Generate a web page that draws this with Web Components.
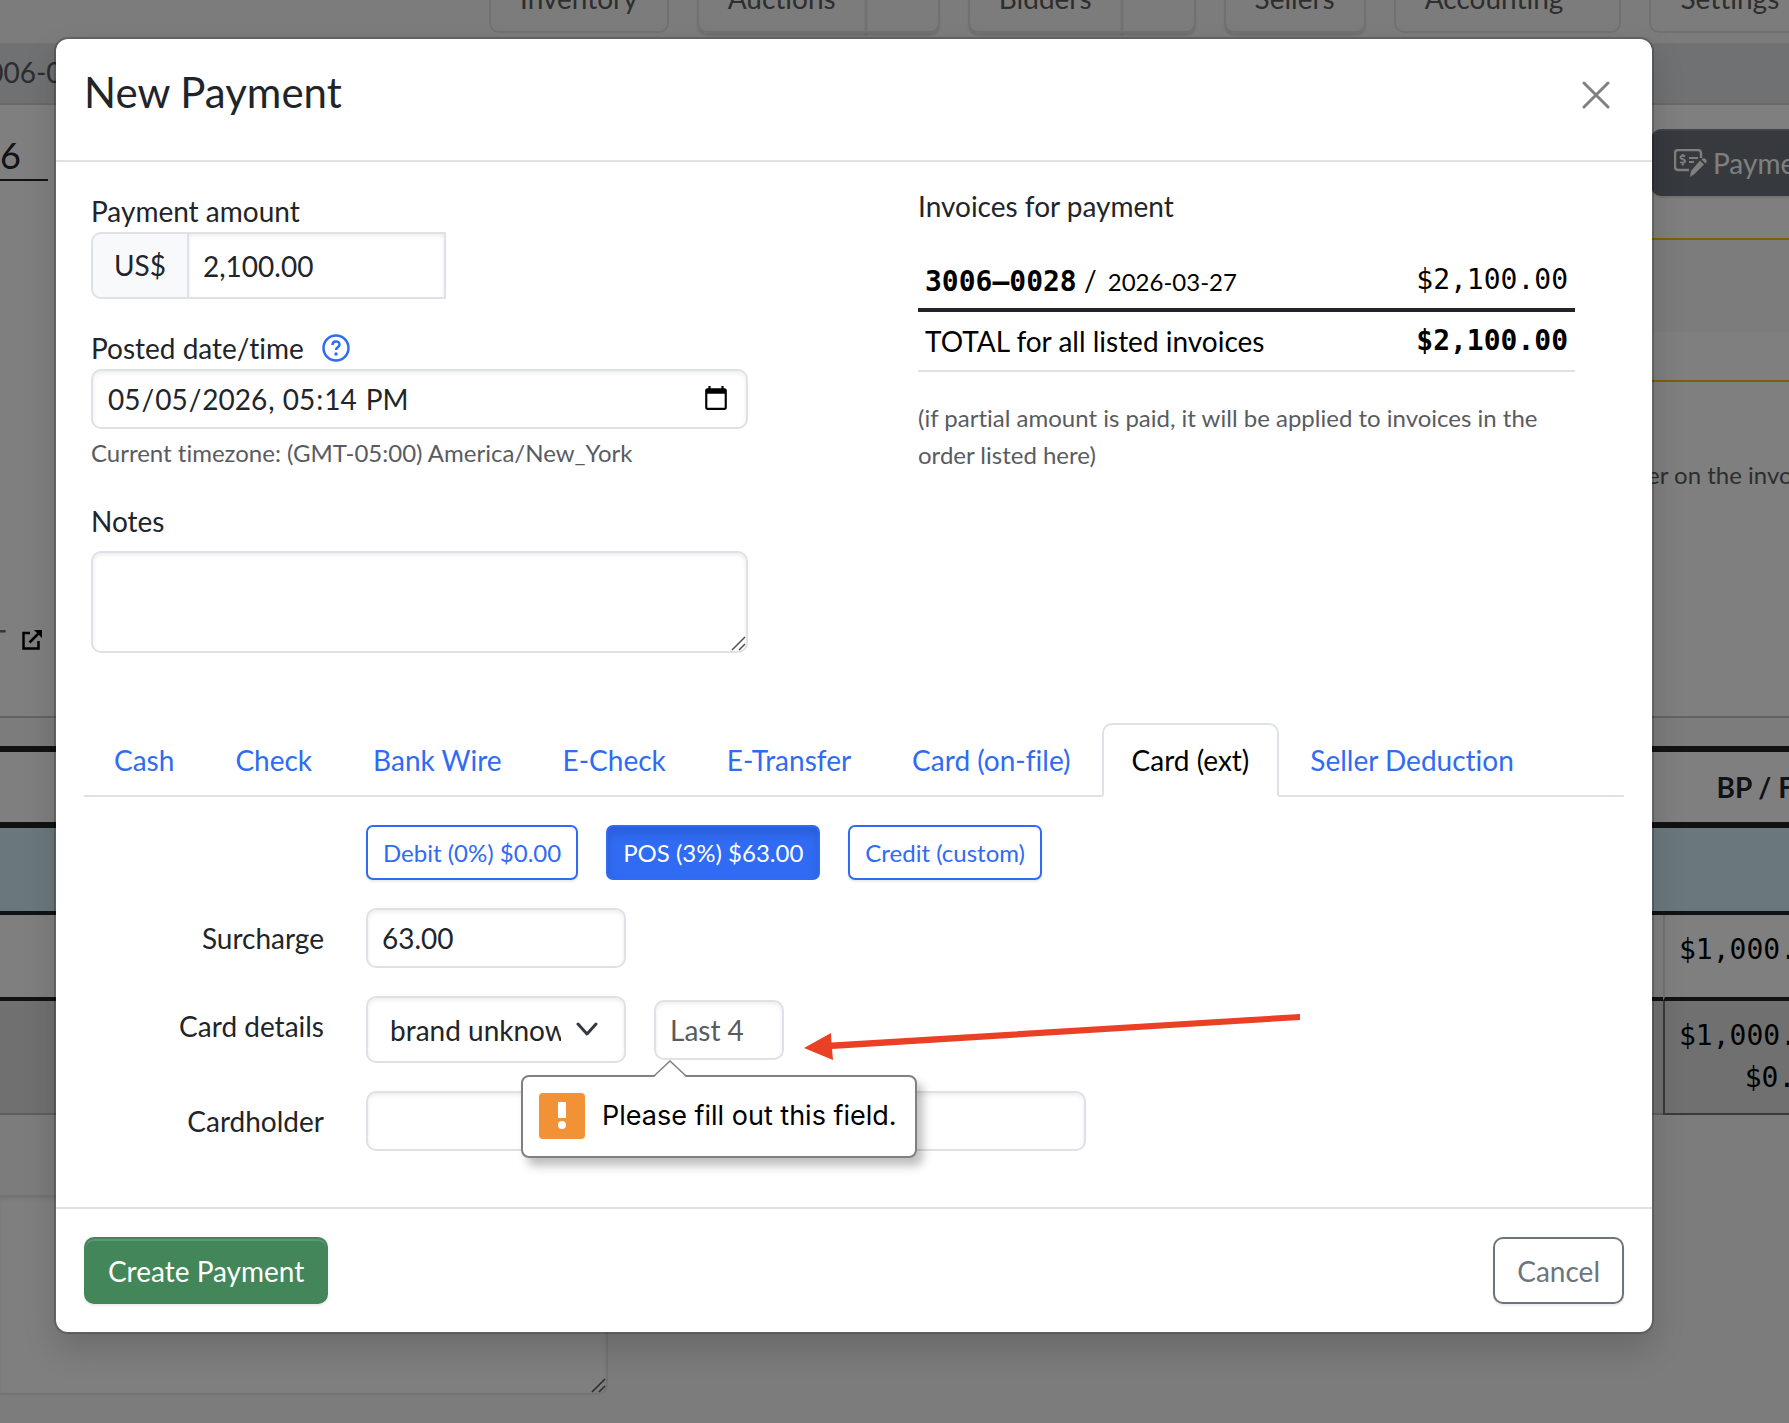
<!DOCTYPE html>
<html lang="en">
<head>
<meta charset="utf-8">
<meta name="viewport" content="width=device-width, initial-scale=1">
<title>New Payment</title>
<style>
  :root {
    --text: #212529;
    --muted: #595c5f;
    --border: #dee2e6;
    --primary: #306bf3;
    --success: #42865a;
    --secondary: #6c757d;
    --mono: "DejaVu Sans Mono", monospace;
  }
  body {
    margin: 0;
    font: 28px/42px Lato, sans-serif;
    font-variant-ligatures: none;
    color: var(--text);
    background: #f9f9f9;
  }
</style>
</head>
<body>
<invoice-page></invoice-page>
<payment-modal>
  <span slot="title">New Payment</span>
  <payment-summary></payment-summary>
  <method-tabs active="Card (ext)"></method-tabs>
  <card-form></card-form>
  <app-button slot="footer" variant="success">Create Payment</app-button>
  <app-button slot="footer" variant="outline">Cancel</app-button>
</payment-modal>

<script>
function define(name, html, setup) {
  const template = document.createElement("template");
  template.innerHTML = html;
  customElements.define(
    name,
    class extends HTMLElement {
      connectedCallback() {
        if (this.shadowRoot) return;
        this.attachShadow({ mode: "open" });
        this.shadowRoot.appendChild(template.content.cloneNode(true));
        if (setup) setup(this, this.shadowRoot);
      }
    }
  );
}

const resizerStyles = `
  textarea::-webkit-resizer {
    background: url("data:image/svg+xml,%3Csvg xmlns='http://www.w3.org/2000/svg' width='15' height='15' fill='none' stroke='%23505050' stroke-width='1.500'%3E%3Cpath d='M1 14L14 1M8 14l6-6'/%3E%3C/svg%3E") no-repeat center;
  }
`;

const controlStyles = `
  * { box-sizing: border-box; }
  input, textarea, select {
    display: block;
    width: 100%;
    margin: 0;
    padding: 7px 14px;
    font: inherit;
    color: inherit;
    background: #fff;
    border: 2px solid var(--border);
    border-radius: 10px;
    box-shadow: inset 0 2px 4px rgba(0, 0, 0, 0.08);
    outline: none;
  }
  input { height: 60px; }
  input::placeholder { color: var(--muted); opacity: 1; }
`;

define("app-button", `
  <style>
    :host { display: block; }
    button {
      height: 67px;
      padding: 0 22px;
      font: inherit;
      border: 2px solid var(--secondary);
      border-radius: 10px;
      color: var(--secondary);
      background: #fff;
      box-shadow: 0 2px 2px rgba(0, 0, 0, 0.08);
      cursor: pointer;
    }
    :host([variant="success"]) button {
      color: #fff;
      background: var(--success);
      border-color: var(--success);
      box-shadow: inset 0 2px 0 rgba(255, 255, 255, 0.15), 0 2px 2px rgba(0, 0, 0, 0.08);
    }
    :host([variant="small"]) button {
      height: 55px;
      padding: 0 15px;
      font-size: 24px;
      border-color: var(--primary);
      border-radius: 7px;
      color: var(--primary);
    }
    :host([variant="small"][pressed]) button {
      color: #fff;
      background: var(--primary);
      box-shadow: inset 0 6px 10px rgba(0, 0, 0, 0.13);
    }
  </style>
  <button type="button"><slot></slot></button>
`);

define("nav-button", `
  <style>
    :host { display: flex; flex: none; }
    button {
      height: 67px;
      padding: 0 29px 4px;
      font: inherit;
      color: #5c5c5c;
      background: none;
      border: 2px solid var(--border);
      border-radius: 10px;
    }
    .more { display: none; width: 75px; margin-left: -2px; padding: 0; }
    :host([split]) .more { display: block; border-radius: 0 10px 10px 0; }
    :host([split]) .main { border-radius: 10px 0 0 10px; }
    :host([raised]) button { box-shadow: 0 3px 2px rgba(0, 0, 0, 0.1); }
    :host([caret]) .main { padding-right: 56px; }
  </style>
  <button class="main" type="button"><slot></slot></button>
  <button class="more" type="button" aria-label="More"></button>
`);

define("invoice-page", `
  <style>
    ${resizerStyles}
    :host {
      display: block;
      position: fixed;
      inset: 0;
      overflow: hidden;
      background: #f9f9f9;
    }
    * { box-sizing: border-box; }
    nav {
      display: flex;
      align-items: flex-end;
      gap: 28px;
      height: 43px;
      padding: 0 0 10px 489px;
      overflow: hidden;
    }
    .crumbs {
      height: 62px;
      padding-top: 8px;
      color: #575a5e;
      background: var(--border);
      border-bottom: 2px solid #cfd3d7;
    }
    .crumbs span {
      display: block;
      width: 56px;
      text-indent: -29px;
      white-space: nowrap;
      overflow: hidden;
    }
    main { background: #fff; border-bottom: 2px solid #c6c6c6; }
    .row { display: flex; justify-content: space-between; }
    .top { padding-top: 24px; }
    h1 {
      width: 48px;
      height: 52px;
      margin: 0;
      padding-top: 2px;
      font-size: 36px;
      font-weight: 400;
      line-height: 48px;
      border-bottom: 2px solid #212529;
    }
    .payment {
      display: flex;
      align-items: center;
      gap: 6px;
      flex: 0 0 138px;
      height: 67px;
      padding: 0 0 0 23px;
      font: inherit;
      color: #fff;
      background: var(--secondary);
      border: 0;
      border-radius: 10px 0 0 10px;
      box-shadow: inset 0 4px 0 -2px rgba(255, 255, 255, 0.15), 0 2px 2px rgba(0, 0, 0, 0.1);
      overflow: hidden;
    }
    .payment svg { flex: none; }
    .alert {
      height: 144px;
      margin: 42px 0 74px 200px;
      background: linear-gradient(#f9f9f9 92px, #fff 92px);
      border: solid #ffc107;
      border-width: 2px 0;
    }
    .note {
      margin: 0 0 126px auto;
      width: 142px;
      font-size: 24px;
      line-height: 37px;
      color: var(--muted);
      white-space: nowrap;
      overflow: hidden;
    }
    .link { display: flex; gap: 16px; align-items: center; margin-bottom: 55px; color: #6c757d; }
    .link span { display: flex; justify-content: flex-end; width: 6px; overflow: hidden; }
    table {
      width: calc(100% + 54px);
      margin-top: 28px;
      table-layout: fixed;
      border-spacing: 0;
      border-top: 6px solid #212529;
      background: #fff;
      color: #000;
    }
    col.total { width: 180px; }
    th, td {
      padding: 14px;
      vertical-align: top;
      text-align: right;
      border-bottom: 4px solid #212529;
    }
    th { height: 76px; padding-right: 8px; border-bottom-width: 6px; color: #212529; }
    td { font-family: var(--mono); }
    .info td { height: 87px; background: #d5f0f8; }
    .item td { height: 86px; }
    .item td + td { border-left: 2px solid var(--border); }
    .sum td { height: 114px; background: #e1e1e1; border-bottom: 2px solid #bdbdbd; }
    .sum td + td { border-left: 2px solid #71777d; border-bottom-color: #71777d; }
    textarea {
      display: block;
      width: 608px;
      height: 200px;
      margin-top: 80px;
      background: #fff;
      border: 2px solid #e3e6e9;
      border-left: 0;
      border-radius: 0 10px 10px 0;
      box-shadow: inset 0 2px 4px rgba(0, 0, 0, 0.08);
    }
  </style>
  <nav>
    <nav-button>Inventory</nav-button>
    <nav-button split raised>Auctions</nav-button>
    <nav-button split raised>Bidders</nav-button>
    <nav-button raised>Sellers</nav-button>
    <nav-button caret>Accounting</nav-button>
    <nav-button caret>Settings</nav-button>
  </nav>
  <div class="crumbs"><span>3006-0028</span></div>
  <main>
    <div class="row top">
      <h1>6</h1>
      <button class="payment" type="button">
        <svg width="33" height="28" viewBox="0 0 33 28" fill="none" stroke="currentColor" stroke-width="2.500">
          <path d="M27 9V4a3 3 0 0 0-3-3H4a3 3 0 0 0-3 3v14a3 3 0 0 0 3 3h11"/>
          <path stroke-width="2" d="M11 7.500c-1-1-4.500-1-4.500 1s4.500 1.600 4.500 3.600-3.500 2-4.700.8M8.700 5v2M8.700 14v2.500M15 9h9M15 13h5"/>
          <path fill="currentColor" stroke="none" d="M26 11.500l4 4-9.500 9.500-4.500 3 1-6zM27.500 10.500c1.500-1.500 3-1.500 4.300-.2s1.200 2.700-.3 4.200z"/>
        </svg>
        Payment
      </button>
    </div>
    <div class="alert"></div>
    <div class="note">er on the invoice</div>
    <div class="link">
      <span>T</span>
      <svg width="20" height="20" viewBox="0 0 20 20" fill="none" stroke="#000" stroke-width="2.500">
        <path d="M8 3H1.500v15.500h15V11M7.500 12.500L17 3"/>
        <path fill="#000" stroke="none" d="M12 0h8v8z"/>
      </svg>
    </div>
  </main>
  <table>
    <colgroup><col><col class="total"></colgroup>
    <tr><th></th><th>BP / Fees</th></tr>
    <tr class="info"><td></td><td></td></tr>
    <tr class="item"><td></td><td>$1,000.00</td></tr>
    <tr class="sum"><td></td><td>$1,000.00<br>$0.00</td></tr>
  </table>
  <textarea aria-label="Invoice notes"></textarea>
`);

define("payment-modal", `
  <style>
    :host {
      display: block;
      position: fixed;
      inset: 0;
      overflow: auto;
      background: rgba(0, 0, 0, 0.5);
    }
    section {
      margin: 37px 135px 37px 54px;
      background: #fff;
      background-clip: padding-box;
      border: 2px solid rgba(0, 0, 0, 0.2);
      border-radius: 14px;
      box-shadow: 0 16px 32px rgba(0, 0, 0, 0.15);
    }
    header {
      display: flex;
      justify-content: space-between;
      align-items: flex-end;
      padding: 28px 28px 43px;
      border-bottom: 2px solid var(--border);
    }
    h2 { margin: 0; font-size: 42px; font-weight: 400; line-height: 50px; }
    .close { display: flex; padding: 7px 14px 8px; border: 0; background: none; cursor: pointer; }
    .body { padding: 28px 28px 56px; }
    footer {
      display: flex;
      justify-content: space-between;
      padding: 28px;
      border-top: 2px solid var(--border);
    }
  </style>
  <section role="dialog" aria-labelledby="title">
    <header>
      <h2 id="title"><slot name="title"></slot></h2>
      <button class="close" type="button" aria-label="Close">
        <svg width="28" height="28" viewBox="0 0 28 28" stroke="#808080" stroke-width="3" stroke-linecap="round">
          <path d="M2 2l24 24M26 2L2 26"/>
        </svg>
      </button>
    </header>
    <div class="body"><slot></slot></div>
    <footer><slot name="footer"></slot></footer>
  </section>
`);

define("payment-summary", `
  <style>
    ${controlStyles}
    ${resizerStyles}
    :host {
      display: grid;
      grid-template-columns: 1fr 1fr;
      gap: 170px;
      padding: 0 49px 0 7px;
    }
    label { display: block; }
    .amount { display: flex; width: 355px; margin-bottom: 28px; }
    .amount span {
      flex: none;
      width: 96px;
      line-height: 63px;
      text-align: center;
      background: #f8f9fa;
      border: 2px solid var(--border);
      border-right: 0;
      border-radius: 10px 0 0 10px;
    }
    .amount input { height: 67px; padding: 0 14px; border-radius: 0; }
    .posted { display: flex; align-items: center; gap: 18px; }
    .zone { margin: 5px 0 29px; font-size: 24px; line-height: 37px; color: var(--muted); }
    textarea { height: 102px; margin-top: 9px; resize: vertical; }
    .help { display: flex; }
  </style>
  <div>
    <label for="amount">Payment amount</label>
    <div class="amount"><span>US$</span><input id="amount" value="2,100.00"></div>
    <div class="posted">
      <label for="posted">Posted date/time</label>
      <a class="help" href="#help" aria-label="Help">
        <svg width="28" height="28" viewBox="0 0 28 28" fill="none" stroke="#306bf3" stroke-width="2.500">
          <circle cx="14" cy="14" r="12.500"/>
          <path d="M10.500 11c0-4.800 7-4.600 7-.6 0 2.800-3.500 2.700-3.500 5.600"/>
          <circle cx="14" cy="20" r="1.700" fill="#306bf3" stroke="none"/>
        </svg>
      </a>
    </div>
    <input id="posted" type="datetime-local" value="2026-05-05T17:14">
    <div class="zone">Current timezone: (GMT-05:00) America/New_York</div>
    <label for="notes">Notes</label>
    <textarea id="notes"></textarea>
  </div>
  <invoice-list></invoice-list>
`);

define("invoice-list", `
  <style>
    :host { display: block; }
    h3 { margin: 0 0 30px; font-size: 28px; font-weight: 400; line-height: 32px; }
    table { width: 100%; border-collapse: separate; border-spacing: 0; color: #000; }
    td { height: 42px; padding: 7px; line-height: 42px; border-bottom: 4px solid #212529; }
    tr:last-child td { padding: 8px 7px; border-bottom: 2px solid var(--border); }
    td:last-child { text-align: right; }
    td:last-child, b { font-family: var(--mono); }
    b, small { line-height: 28px; }
    small { margin-left: 4px; font-size: 24px; }
    tr:last-child td:last-child { font-weight: 700; }
    p { margin: 27px 0 0; font-size: 24px; line-height: 37px; color: var(--muted); }
  </style>
  <h3>Invoices for payment</h3>
  <table>
    <tr><td><b>3006–0028</b> / <small>2026-03-27</small></td><td>$2,100.00</td></tr>
    <tr><td>TOTAL for all listed invoices</td><td>$2,100.00</td></tr>
  </table>
  <p>(if partial amount is paid, it will be applied to invoices in the order listed here)</p>
`);

const methods = ["Cash", "Check", "Bank Wire", "E-Check", "E-Transfer", "Card (on-file)", "Card (ext)", "Seller Deduction"];

define("method-tabs", `
  <style>
    :host {
      display: flex;
      gap: 1px;
      margin: 70px 0 28px;
      box-shadow: inset 0 -2px 0 var(--border);
    }
    a {
      padding: 14px 28px;
      color: var(--primary);
      text-decoration: none;
      white-space: nowrap;
      border: 2px solid transparent;
      border-radius: 10px 10px 0 0;
    }
    a.active {
      color: #000;
      background: #fff;
      border-color: var(--border) var(--border) #fff;
    }
  </style>
`, (host, root) => {
  methods.forEach((label) => {
    const tab = document.createElement("a");
    tab.href = "#";
    tab.textContent = label;
    if (label === host.getAttribute("active")) tab.classList.add("active");
    root.appendChild(tab);
  });
});

define("validation-bubble", `
  <style>
    :host {
      display: flex;
      align-items: center;
      gap: 17px;
      box-sizing: border-box;
      height: 83px;
      padding: 0 18px 0 16px;
      font: 27px/40px Inter, sans-serif;
      color: #000;
      white-space: nowrap;
      background: #fff;
      border: 2px solid #808080;
      border-radius: 8px;
      box-shadow: 6px 8px 10px rgba(0, 0, 0, 0.25);
    }
    .tip { position: absolute; left: 131px; top: -17px; }
    svg { flex: none; }
  </style>
  <svg class="tip" width="34" height="18" viewBox="0 0 34 18">
    <path d="M0 18L1 16 16 1 31 16 32 18z" fill="#fff"/>
    <path d="M0 16L16 1l16 15" fill="none" stroke="#808080" stroke-width="1.500"/>
  </svg>
  <svg width="46" height="46" viewBox="0 0 46 46">
    <rect width="46" height="46" rx="4" fill="#f09235"/>
    <path d="M19 9h8v16h-8z" fill="#fff"/>
    <circle cx="23" cy="32" r="4" fill="#fff"/>
  </svg>
  <slot></slot>
`);

define("card-form", `
  <style>
    ${controlStyles}
    :host {
      display: grid;
      grid-template-columns: 240px 1fr;
      gap: 28px 42px;
      align-items: start;
    }
    label { padding-top: 9px; text-align: right; }
    .fields { grid-column: 2; display: flex; align-items: center; gap: 28px; }
    .short { width: 260px; }
    .long { width: 720px; }
    select {
      width: 260px;
      height: 67px;
      padding: 0 63px 0 22px;
      appearance: none;
      background: url("data:image/svg+xml,%3Csvg xmlns='http://www.w3.org/2000/svg' width='22' height='16' fill='none' stroke='%23343a40' stroke-width='3' stroke-linecap='round' stroke-linejoin='round'%3E%3Cpath d='M2 2l9 10 9-10'/%3E%3C/svg%3E") no-repeat right 26px center, #fff;
    }
    .last4 { position: relative; width: 130px; }
    .last4 input { padding-right: 0; }
    validation-bubble { position: absolute; left: -133px; top: 75px; z-index: 1; }
    .arrow { position: absolute; left: 149px; top: 13px; z-index: 1; }
  </style>
  <div class="fields">
    <app-button variant="small">Debit (0%) $0.00</app-button>
    <app-button variant="small" pressed>POS (3%) $63.00</app-button>
    <app-button variant="small">Credit (custom)</app-button>
  </div>
  <label for="surcharge">Surcharge</label>
  <input class="short" id="surcharge" value="63.00">
  <label for="brand">Card details</label>
  <div class="fields">
    <select id="brand"><option>brand unknown</option></select>
    <div class="last4">
      <input placeholder="Last 4" aria-label="Last 4" required>
      <validation-bubble>Please fill out this field.</validation-bubble>
      <svg class="arrow" width="500" height="50" viewBox="0 0 500 50" fill="#ea4025">
        <path d="M1 35L28 20l.5 9.500L497 1v6L29 36l1 11z"/>
      </svg>
    </div>
  </div>
  <label for="holder">Cardholder</label>
  <input class="long" id="holder">
`);
</script>
</body>
</html>
